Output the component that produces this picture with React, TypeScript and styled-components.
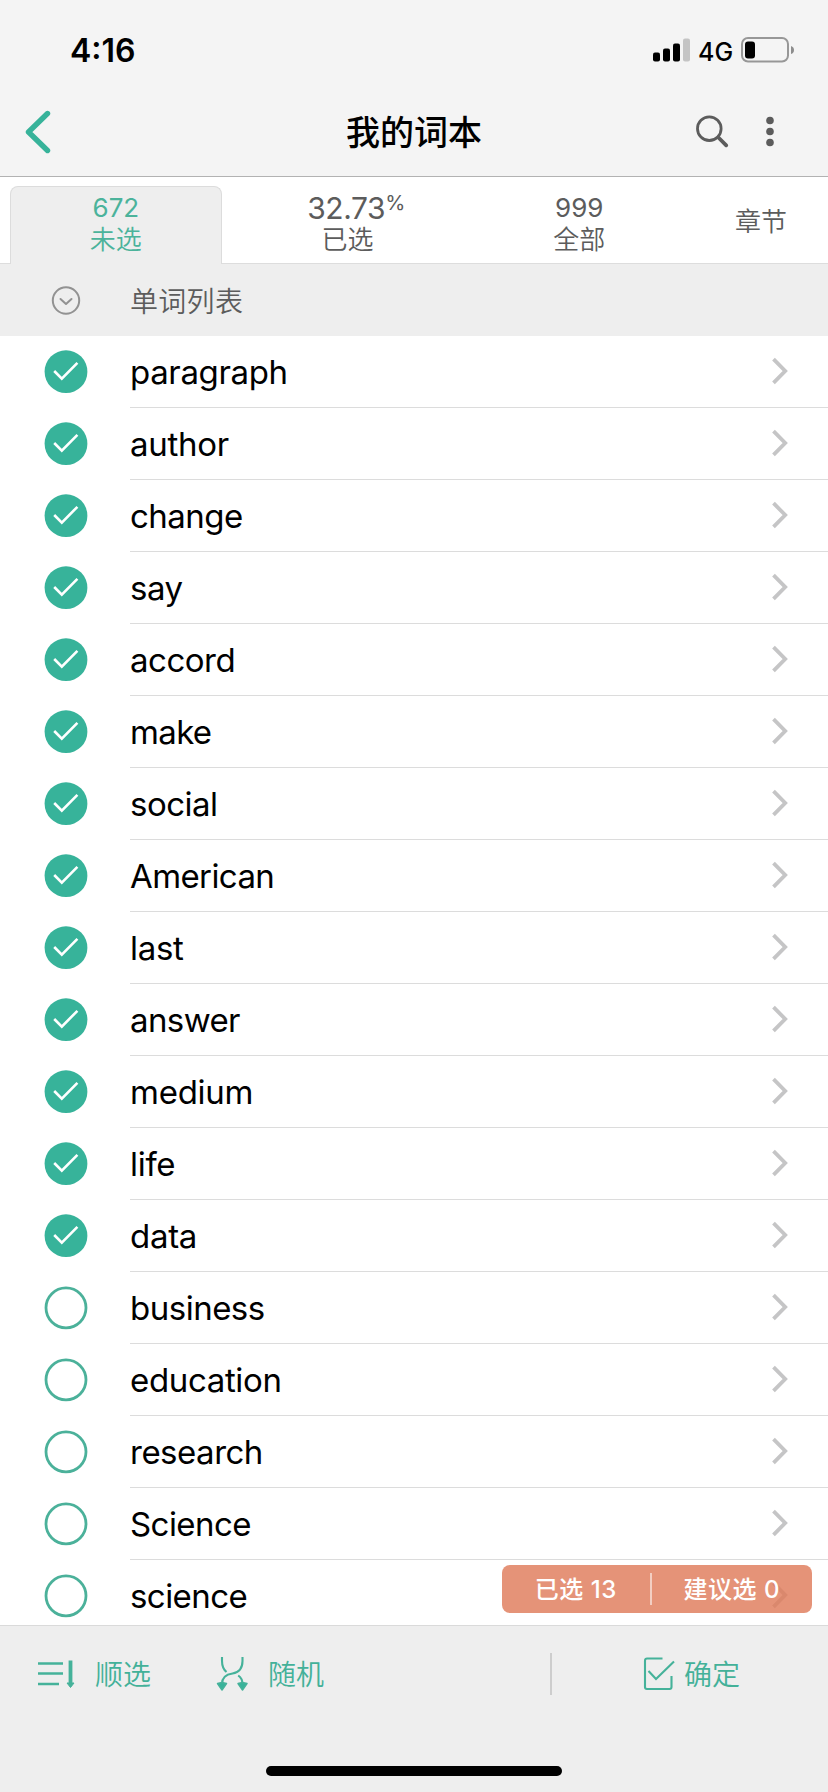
import React from "react";
import styled, { createGlobalStyle } from "styled-components";

const teal = "#37b39a";

const GlobalStyle = createGlobalStyle`
  * { box-sizing: border-box; }
  body {
    margin: 0;
    background: #fff;
    font-family: Inter, "Noto Sans CJK SC", sans-serif;
    color: #000;
  }
  svg { display: block; flex: none; }
`;

const Screen = styled.div`
  width: 828px;
  height: 1792px;
  display: flex;
  flex-direction: column;
  overflow: hidden;
`;

const Top = styled.header`
  height: 177px;
  flex: none;
  background: #f4f4f4;
  border-bottom: 1px solid #b2b2b2;
`;

const StatusBar = styled.div`
  height: 88px;
  padding: 12px 34px 0 70px;
  display: flex;
  align-items: center;
  justify-content: space-between;
`;

const Clock = styled.span`
  font-size: 32px;
  font-weight: 600;
  line-height: 40px;
  padding-top: 1px;
`;

const StatusIcons = styled.div`
  display: flex;
  align-items: center;
`;

const Network = styled.span`
  width: 51px;
  padding-left: 8px;
  font-size: 25px;
  font-weight: 500;
  line-height: 30px;
  padding-top: 3px;
`;

const NavBar = styled.div`
  height: 88px;
  padding: 0 52px 0 24px;
  display: grid;
  grid-template-columns: 100px 1fr 72px;
  align-items: center;
`;

const Title = styled.h1`
  margin: 0;
  padding-top: 1px;
  text-align: center;
  font-size: 34px;
  font-weight: 500;
  line-height: 44px;
`;

const NavActions = styled.div`
  display: flex;
  align-items: center;
  justify-content: flex-end;
  gap: 37px;
`;

const Tabs = styled.nav`
  height: 87px;
  flex: none;
  display: flex;
  padding: 9px 0 0 10px;
  background: linear-gradient(#ddd, #ddd) bottom / 100% 1px no-repeat #fff;
`;

const Tab = styled.div<{ $width: number; $active?: boolean }>`
  width: ${(p) => p.$width}px;
  display: flex;
  flex-direction: column;
  align-items: center;
  font-size: 26px;
  color: ${(p) => (p.$active ? "#4bb39b" : "#5c5c5c")};
  background: ${(p) => (p.$active ? "#eee" : "none")};
  border: 1px solid ${(p) => (p.$active ? "#dcdcdc" : "transparent")};
  border-bottom: 0;
  border-radius: 8px 8px 0 0;
`;

const Count = styled.div`
  height: 38px;
  display: flex;
  align-items: flex-end;
  padding-bottom: 1px;
  line-height: 32px;
  font-weight: 400;
`;

const Percent = styled(Count)`
  font-size: 30px;
  line-height: 33px;
  padding-left: 17px;
  padding-bottom: 0;
  letter-spacing: -0.4px;
`;

const PercentSign = styled.span`
  font-size: 20.5px;
  line-height: 24px;
  align-self: flex-start;
  margin-top: 4px;
`;

const TabLabel = styled.div`
  line-height: 30px;
  height: 30px;
  font-weight: 350;
`;

const ChapterTab = styled(Tab)`
  margin-left: 9px;
  padding-top: 20px;
`;

const SectionHead = styled.div`
  height: 72px;
  flex: none;
  display: flex;
  align-items: center;
  background: #eee;
  font-size: 28px;
  letter-spacing: 0.3px;
  font-weight: 350;
  color: #5c5c5c;
`;

const IconCell = styled.div`
  width: 130px;
  padding-left: 44px;
  flex: none;
`;

const ListArea = styled.main`
  position: relative;
  flex: 1;
  min-height: 0;
  overflow: hidden;
`;

const Row = styled.div`
  height: 72px;
  display: flex;
  align-items: center;
`;

const RowBody = styled.div`
  flex: 1;
  height: 72px;
  padding-right: 38px;
  display: flex;
  align-items: center;
  justify-content: space-between;
  border-bottom: 1px solid #dcdcdc;
`;

const Word = styled.span<{ $spacing: number }>`
  font-size: 33px;
  line-height: 40px;
  letter-spacing: ${(p) => p.$spacing}px;
  padding-top: 1px;
`;

const Toast = styled.div`
  position: absolute;
  right: 16px;
  bottom: 12px;
  width: 310px;
  height: 48px;
  border-radius: 8px;
  background: rgba(223, 120, 86, 0.8);
  color: #fff;
  display: flex;
  align-items: center;
  font-size: 24px;
  font-weight: 500;
`;

const ToastPart = styled.div<{ $width: number }>`
  width: ${(p) => p.$width}px;
  text-align: center;
  line-height: 32px;
  letter-spacing: 0.5px;
  padding-top: 2px;
  white-space: nowrap;
`;

const ToastRule = styled.div`
  width: 2px;
  height: 32px;
  background: rgba(255, 255, 255, 0.55);
`;

const Footer = styled.footer`
  height: 167px;
  flex: none;
  background: #eee;
  border-top: 1px solid #dadada;
  display: flex;
  flex-direction: column;
  justify-content: space-between;
  align-items: center;
  padding-bottom: 16px;
`;

const Actions = styled.div`
  width: 100%;
  height: 96px;
  display: flex;
  align-items: center;
  padding: 0 88px 0 36px;
`;

const Action = styled.div<{ $gap: number; $after?: number }>`
  display: flex;
  align-items: center;
  gap: ${(p) => p.$gap}px;
  margin-right: ${(p) => p.$after ?? 0}px;
`;

const ActionLabel = styled.span`
  padding-top: 2px;
  font-size: 28px;
  font-weight: 350;
  line-height: 40px;
  color: #43b199;
`;

const ActionRule = styled.div`
  width: 2px;
  height: 42px;
  background: #cdcdcd;
  margin-left: auto;
  margin-right: 90px;
`;

const HomeBar = styled.div`
  width: 296px;
  height: 10px;
  border-radius: 5px;
  background: #000;
`;

const words: [string, number][] = [
  ["paragraph", -0.35],
  ["author", -0.3],
  ["change", -0.55],
  ["say", -0.5],
  ["accord", -0.5],
  ["make", -0.65],
  ["social", -0.5],
  ["American", -0.6],
  ["last", -0.3],
  ["answer", -0.6],
  ["medium", -0.25],
  ["life", -0.3],
  ["data", -0.3],
  ["business", -0.5],
  ["education", -0.35],
  ["research", -0.5],
  ["Science", -0.55],
  ["science", -0.55],
];
const selectedCount = 13;

const Signal = () => (
  <svg width="37" height="24" viewBox="0 0 37 24">
    <rect x="0" y="14.5" width="7" height="9" rx="2" />
    <rect x="10" y="10.5" width="7" height="13" rx="2" />
    <rect x="20" y="5.5" width="7" height="18" rx="2" />
    <rect x="30" y="0.5" width="7" height="23" rx="2" fill="#c4c4c4" />
  </svg>
);

const Battery = () => (
  <svg width="53" height="26" viewBox="0 0 53 26">
    <rect x="1" y="1" width="46" height="23.5" rx="6" fill="none" stroke="#979797" strokeWidth="2" />
    <rect x="4" y="4.5" width="10" height="17" rx="3" />
    <path d="M50 9v8q3-1 3-4t-3-4z" fill="#8d8d8d" />
  </svg>
);

const Back = () => (
  <svg width="28" height="44" viewBox="0 0 28 44" fill="none" stroke={teal} strokeWidth="5.4" strokeLinecap="round" strokeLinejoin="round">
    <path d="M23.5 3.5 4.5 22l19 18.5" />
  </svg>
);

const Search = () => (
  <svg width="34" height="34" viewBox="0 0 34 34" fill="none" stroke="#5c5c5c" strokeLinecap="round">
    <circle cx="14.3" cy="13.7" r="11.8" strokeWidth="2.8" />
    <path d="m23.4 22.5 7.8 7.8" strokeWidth="3.8" />
  </svg>
);

const More = () => (
  <svg width="10" height="32" viewBox="0 0 10 32" fill="#5c5c5c">
    <circle cx="4" cy="4.5" r="3.8" />
    <circle cx="4" cy="15.5" r="3.8" />
    <circle cx="4" cy="26.5" r="3.8" />
  </svg>
);

const Collapse = () => (
  <svg width="44" height="30" viewBox="0 0 44 30" fill="none" stroke="#929292" strokeWidth="2">
    <circle cx="22" cy="15.5" r="13.2" />
    <path d="m16.5 14 5.5 5 5.5-5" strokeLinecap="round" strokeLinejoin="round" />
  </svg>
);

const Check = ({ on }: { on: boolean }) => (
  <svg width="44" height="44" viewBox="0 0 44 44" fill="none">
    {on ? (
      <>
        <circle cx="22" cy="21.7" r="21.4" fill={teal} />
        <path d="m10.2 21 7.6 7.6L33.4 12.8" stroke="#fff" strokeWidth="2.6" />
      </>
    ) : (
      <circle cx="22" cy="21.8" r="20" stroke="#4bb19a" strokeWidth="2.8" />
    )}
  </svg>
);

const Chevron = () => (
  <svg width="20" height="30" viewBox="0 0 20 30" fill="none" stroke="#c5c5c6" strokeWidth="3.8">
    <path d="M3.5 2.2 15.2 14 3.5 25.8" />
  </svg>
);

const OrderIcon = () => (
  <svg width="40" height="36" viewBox="0 0 40 36" fill="none" stroke="#45b29a">
    <path d="M2 7.5h25M2 17.5h25M2 28h21" strokeWidth="2.4" />
    <path d="M34.5 4.5v23" strokeWidth="3.8" />
    <path d="M31 27h7l-3.5 4.500z" fill="#45b29a" strokeWidth="1" />
  </svg>
);

const ShuffleIcon = () => (
  <svg width="34" height="36" viewBox="0 0 34 36" fill="none" stroke="#45b29a" strokeWidth="2.1">
    <path d="M7 1v4c0 5.500 1.500 8.500 4.500 11M27.500 1v4C27.500 13 24 16.500 17.500 17.500 10.500 18.500 7 22 7 28" />
    <path d="M23.200 19.500c3 2 4.300 4.500 4.300 8.500" />
    <path d="M2.500 27.500 7 26.500l4.500 1L7 34zM23 27.500l4.500-1 4.500 1-4.500 6.500z" fill="#37b39a" strokeLinejoin="round" strokeWidth="1.500" />
  </svg>
);

const ConfirmIcon = () => (
  <svg width="34" height="36" viewBox="0 0 34 36" fill="none" stroke="#45b29a" strokeWidth="2.1">
    <path d="M20.500 2.500H5a2 2 0 0 0-2 2V31a2 2 0 0 0 2 2h22.500a2 2 0 0 0 2-2V20" />
    <path d="m6.500 15 7.500 8L32 5.500" />
  </svg>
);

export default function App() {
  return (
    <Screen>
      <GlobalStyle />
      <Top>
        <StatusBar>
          <Clock>4:16</Clock>
          <StatusIcons>
            <Signal />
            <Network>4G</Network>
            <Battery />
          </StatusIcons>
        </StatusBar>
        <NavBar>
          <Back />
          <Title>我的词本</Title>
          <NavActions>
            <Search />
            <More />
          </NavActions>
        </NavBar>
      </Top>
      <Tabs>
        <Tab $width={212} $active>
          <Count>672</Count>
          <TabLabel>未选</TabLabel>
        </Tab>
        <Tab $width={252}>
          <Percent>
            32.73<PercentSign>%</PercentSign>
          </Percent>
          <TabLabel>已选</TabLabel>
        </Tab>
        <Tab $width={212}>
          <Count>999</Count>
          <TabLabel>全部</TabLabel>
        </Tab>
        <ChapterTab $width={134}>
          <TabLabel>章节</TabLabel>
        </ChapterTab>
      </Tabs>
      <SectionHead>
        <IconCell>
          <Collapse />
        </IconCell>
        单词列表
      </SectionHead>
      <ListArea>
        {words.map(([word, spacing], i) => (
          <Row key={word}>
            <IconCell>
              <Check on={i < selectedCount} />
            </IconCell>
            <RowBody>
              <Word $spacing={spacing}>{word}</Word>
              <Chevron />
            </RowBody>
          </Row>
        ))}
        <Toast>
          <ToastPart $width={148}>已选 13</ToastPart>
          <ToastRule />
          <ToastPart $width={161}>建议选 0</ToastPart>
        </Toast>
      </ListArea>
      <Footer>
        <Actions>
          <Action $gap={19} $after={64}>
            <OrderIcon />
            <ActionLabel>顺选</ActionLabel>
          </Action>
          <Action $gap={19}>
            <ShuffleIcon />
            <ActionLabel>随机</ActionLabel>
          </Action>
          <ActionRule />
          <Action $gap={8}>
            <ConfirmIcon />
            <ActionLabel>确定</ActionLabel>
          </Action>
        </Actions>
        <HomeBar />
      </Footer>
    </Screen>
  );
}
